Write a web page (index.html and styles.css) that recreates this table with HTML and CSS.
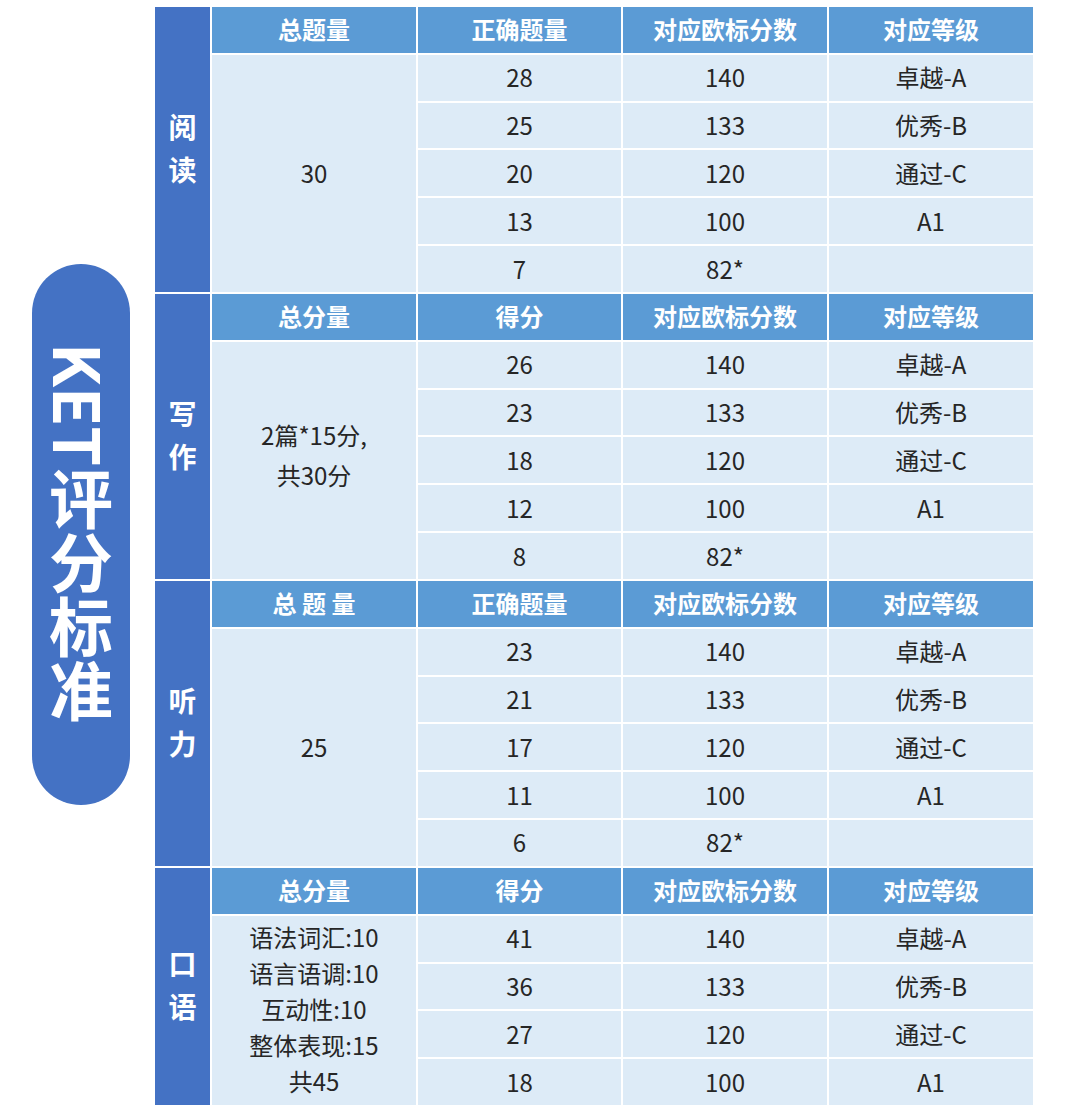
FILE: index.html
```html
<!DOCTYPE html>
<html lang="zh-CN">
<head>
<meta charset="utf-8">
<title>KET评分标准</title>
<link rel="stylesheet" href="styles.css">
</head>
<body>
<div class="page">
  <div class="pill"><span class="pill-text">KET评分标准</span></div>
  <div class="grid">
    <!-- 阅读 -->
    <div class="cat s6">阅<br>读</div>
    <div class="hd">总题量</div><div class="hd">正确题量</div><div class="hd">对应欧标分数</div><div class="hd">对应等级</div>
    <div class="td s5">30</div>
    <div class="td">28</div><div class="td">140</div><div class="td">卓越-A</div>
    <div class="td">25</div><div class="td">133</div><div class="td">优秀-B</div>
    <div class="td">20</div><div class="td">120</div><div class="td">通过-C</div>
    <div class="td">13</div><div class="td">100</div><div class="td">A1</div>
    <div class="td">7</div><div class="td">82*</div><div class="td"></div>

    <!-- 写作 -->
    <div class="cat s6">写<br>作</div>
    <div class="hd">总分量</div><div class="hd">得分</div><div class="hd">对应欧标分数</div><div class="hd">对应等级</div>
    <div class="td s5 multi-w">2篇*15分,<br>共30分</div>
    <div class="td">26</div><div class="td">140</div><div class="td">卓越-A</div>
    <div class="td">23</div><div class="td">133</div><div class="td">优秀-B</div>
    <div class="td">18</div><div class="td">120</div><div class="td">通过-C</div>
    <div class="td">12</div><div class="td">100</div><div class="td">A1</div>
    <div class="td">8</div><div class="td">82*</div><div class="td"></div>

    <!-- 听力 -->
    <div class="cat s6">听<br>力</div>
    <div class="hd">总&nbsp;题&nbsp;量</div><div class="hd">正确题量</div><div class="hd">对应欧标分数</div><div class="hd">对应等级</div>
    <div class="td s5">25</div>
    <div class="td">23</div><div class="td">140</div><div class="td">卓越-A</div>
    <div class="td">21</div><div class="td">133</div><div class="td">优秀-B</div>
    <div class="td">17</div><div class="td">120</div><div class="td">通过-C</div>
    <div class="td">11</div><div class="td">100</div><div class="td">A1</div>
    <div class="td">6</div><div class="td">82*</div><div class="td"></div>

    <!-- 口语 -->
    <div class="cat s5">口<br>语</div>
    <div class="hd">总分量</div><div class="hd">得分</div><div class="hd">对应欧标分数</div><div class="hd">对应等级</div>
    <div class="td s4 multi-s">语法词汇:10<br>语言语调:10<br>互动性:10<br>整体表现:15<br>共45</div>
    <div class="td">41</div><div class="td">140</div><div class="td">卓越-A</div>
    <div class="td">36</div><div class="td">133</div><div class="td">优秀-B</div>
    <div class="td">27</div><div class="td">120</div><div class="td">通过-C</div>
    <div class="td">18</div><div class="td">100</div><div class="td">A1</div>
  </div>
</div>
</body>
</html>
```

FILE: styles.css
```css
* { box-sizing: border-box; }

html, body {
  margin: 0;
  padding: 0;
  background: #ffffff;
}

body {
  width: 1080px;
  height: 1115px;
  overflow: hidden;
  font-family: "Noto Sans CJK SC", "Noto Sans", sans-serif;
}

.page {
  display: flex;
  align-items: flex-start;
  padding: 7px 0 0 32px;
  gap: 25px;
}

.pill {
  margin-top: 257px;
  width: 98px;
  height: 541px;
  border-radius: 49px;
  background: #4472c4;
  display: flex;
  align-items: center;
  justify-content: center;
}

.pill-text {
  writing-mode: vertical-rl;
  color: #ffffff;
  font-size: 64px;
  font-weight: 700;
  line-height: 1;
  letter-spacing: 0;
  margin-bottom: 4px;
}

.grid {
  display: grid;
  grid-template-columns: 55px 204px 203px 204px 204px;
  grid-auto-rows: 45.83px;
  gap: 2px;
  background: #ffffff;
}

.cat {
  background: #4472c4;
  color: #ffffff;
  font-size: 28px;
  font-weight: 700;
  line-height: 43px;
  display: flex;
  align-items: center;
  justify-content: center;
  text-align: center;
  padding-bottom: 2px;
}

.hd {
  background: #5b9bd5;
  color: #ffffff;
  font-size: 24px;
  font-weight: 700;
  display: flex;
  align-items: center;
  justify-content: center;
  padding-bottom: 2px;
}

.td {
  background: #ddebf7;
  color: #262626;
  font-size: 24px;
  display: flex;
  align-items: center;
  justify-content: center;
  text-align: center;
  padding-bottom: 2px;
}

.s6 { grid-row: span 6; }
.s5 { grid-row: span 5; }
.s4 { grid-row: span 4; }

.multi-w { line-height: 40px; padding-bottom: 10px; }
.multi-s { line-height: 36px; }
```
